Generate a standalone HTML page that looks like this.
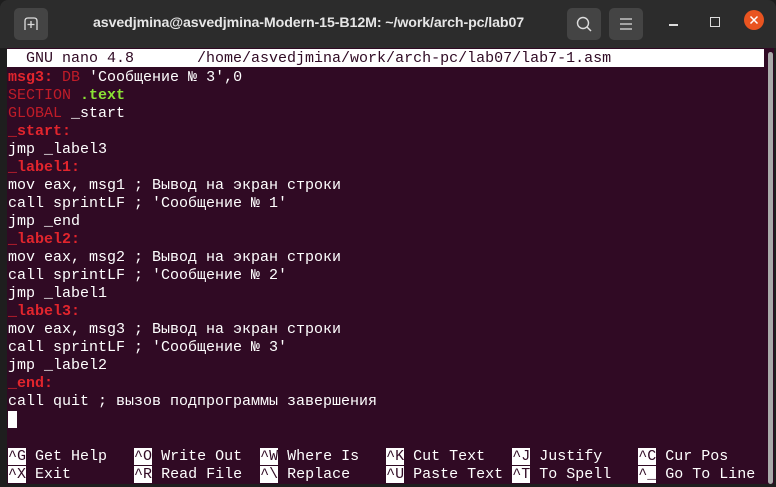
<!DOCTYPE html>
<html><head><meta charset="utf-8"><style>
body{margin:0;width:776px;height:487px;overflow:hidden;background:#1e1e1e;font-family:"Liberation Sans",sans-serif}
#tb{position:absolute;left:0;top:0;width:776px;height:48px;background:#2c2c2c;border-radius:8px 8px 0 0}
#title{position:absolute;left:93px;top:15px;color:#e6e6e6;font-weight:bold;font-size:14.2px;white-space:nowrap;letter-spacing:-0.1px}
.btn{position:absolute;top:8px;width:34px;height:32px;background:#444;border-radius:5px}
#term{position:absolute;left:7px;top:48px;width:767px;height:436px;background:#300a24}
pre{margin:0;position:absolute;left:8px;font-family:"Liberation Mono",monospace;font-size:15px;line-height:18px;color:#fff;white-space:pre}
.l{color:#e2252d;font-weight:bold}.k{color:#c01c28}.g{color:#8ae234;font-weight:bold}
.inv{background:#fff;color:#300a24}
#hdr{position:absolute;left:7px;top:49px;width:757px;height:18px;background:#fff}
#sb{position:absolute;left:768px;top:52px;width:5px;height:432px;background:#aaa;border-radius:3px}
</style></head><body>
<div id="tb">
<div class="btn" style="left:14px"><svg width="34" height="32"><path d="M11 22V13q0-3 3-3h6q3 0 3 3v9" fill="none" stroke="#ddd" stroke-width="1.3"/><path d="M17 13v7M13.5 16.5h7" stroke="#ddd" stroke-width="1.3"/></svg></div>
<div id="title">asvedjmina@asvedjmina-Modern-15-B12M: ~/work/arch-pc/lab07</div>
<div class="btn" style="left:567px"><svg width="34" height="32"><circle cx="16" cy="15" r="5.5" fill="none" stroke="#ddd" stroke-width="1.4"/><path d="M20 19l4 4" stroke="#ddd" stroke-width="1.5"/></svg></div>
<div class="btn" style="left:609px"><svg width="34" height="32"><path d="M11 11h12M11 16h12M11 21h12" stroke="#ddd" stroke-width="1.3"/></svg></div>
<div style="position:absolute;left:669px;top:24px;width:9px;height:1.5px;background:#ddd"></div>
<div style="position:absolute;left:710px;top:17px;width:8px;height:8px;border:1.3px solid #ddd"></div>
<div style="position:absolute;left:744px;top:10px;width:20px;height:20px;border-radius:50%;background:#e95420"><svg width="20" height="20"><path d="M6.5 6.5l7 7M13.5 6.5l-7 7" stroke="#fff" stroke-width="1.5"/></svg></div>
</div>
<div id="term"></div>
<div id="hdr"></div>
<div id="sb"></div>
<pre style="top:50px;color:#300a24">  GNU nano 4.8       /home/asvedjmina/work/arch-pc/lab07/lab7-1.asm</pre>
<pre style="top:69px"><span class="l">msg3:</span> <span class="k">DB</span> 'Сообщение № 3',0
<span class="k">SECTION</span> <span class="g">.text</span>
<span class="k">GLOBAL</span> _start
<span class="l">_start:</span>
jmp _label3
<span class="l">_label1:</span>
mov eax, msg1 ; Вывод на экран строки
call sprintLF ; 'Сообщение № 1'
jmp _end
<span class="l">_label2:</span>
mov eax, msg2 ; Вывод на экран строки
call sprintLF ; 'Сообщение № 2'
jmp _label1
<span class="l">_label3:</span>
mov eax, msg3 ; Вывод на экран строки
call sprintLF ; 'Сообщение № 3'
jmp _label2
<span class="l">_end:</span>
call quit ; вызов подпрограммы завершения
<span class="inv"> </span></pre>
<pre style="top:448px"><span class="inv">^G</span> Get Help   <span class="inv">^O</span> Write Out  <span class="inv">^W</span> Where Is   <span class="inv">^K</span> Cut Text   <span class="inv">^J</span> Justify    <span class="inv">^C</span> Cur Pos
<span class="inv">^X</span> Exit       <span class="inv">^R</span> Read File  <span class="inv">^\</span> Replace    <span class="inv">^U</span> Paste Text <span class="inv">^T</span> To Spell   <span class="inv">^_</span> Go To Line</pre>
</body></html>
